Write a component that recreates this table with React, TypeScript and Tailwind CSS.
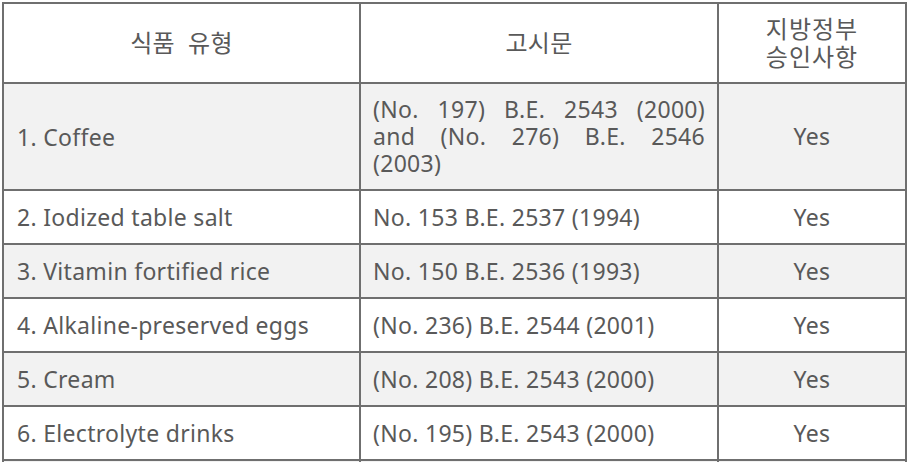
const rows = [
  {
    food: '1. Coffee',
    notice: ['(No. 197) B.E. 2543 (2000)', 'and (No. 276) B.E. 2546', '(2003)'],
    ok: 'Yes',
    tall: true,
  },
  { food: '2. Iodized table salt', notice: ['No. 153 B.E. 2537 (1994)'], ok: 'Yes' },
  { food: '3. Vitamin fortified rice', notice: ['No. 150 B.E. 2536 (1993)'], ok: 'Yes' },
  { food: '4. Alkaline-preserved eggs', notice: ['(No. 236) B.E. 2544 (2001)'], ok: 'Yes' },
  { food: '5. Cream', notice: ['(No. 208) B.E. 2543 (2000)'], ok: 'Yes' },
  { food: '6. Electrolyte drinks', notice: ['(No. 195) B.E. 2543 (2000)'], ok: 'Yes' },
  { food: '', notice: [], ok: '' },
]

export default function App() {
  return (
    <div className="h-[462px] overflow-hidden bg-white pl-[2px] pt-[2px] font-['Noto_Sans','Noto_Sans_CJK_KR',sans-serif] text-[23px] tracking-[0.3px] text-[#595959]">
      <table className="w-[903px] table-fixed border-collapse">
        <colgroup>
          <col className="w-[357px]" />
          <col className="w-[358px]" />
          <col className="w-[188px]" />
        </colgroup>
        <thead>
          <tr className="h-[80px] bg-white text-[24px]">
            <th className="border-2 border-[#6f6f6f] font-normal">식품&nbsp; 유형</th>
            <th className="border-2 border-[#6f6f6f] font-normal">고시문</th>
            <th className="border-2 border-[#6f6f6f] font-normal leading-[28px] tracking-[1px]">
              <div>지방정부</div>
              <div>승인사항</div>
            </th>
          </tr>
        </thead>
        <tbody>
          {rows.map((r, i) => (
            <tr key={i} className={`${r.tall ? 'h-[107px]' : 'h-[54px]'} ${i % 2 === 0 ? 'bg-[#f2f2f2]' : 'bg-white'}`}>
              <td className="border-2 border-[#6f6f6f] pl-[13px] leading-[28px]">{r.food}</td>
              <td className="border-2 border-[#6f6f6f] pl-[12px] pr-[12px] leading-[27px]">
                {r.notice.map((line, j) => (
                  <div
                    key={j}
                    className={r.tall && j < r.notice.length - 1 ? '[text-align-last:justify] text-justify' : ''}
                  >
                    {line}
                  </div>
                ))}
              </td>
              <td className="border-2 border-[#6f6f6f] text-center">{r.ok}</td>
            </tr>
          ))}
        </tbody>
      </table>
    </div>
  )
}
